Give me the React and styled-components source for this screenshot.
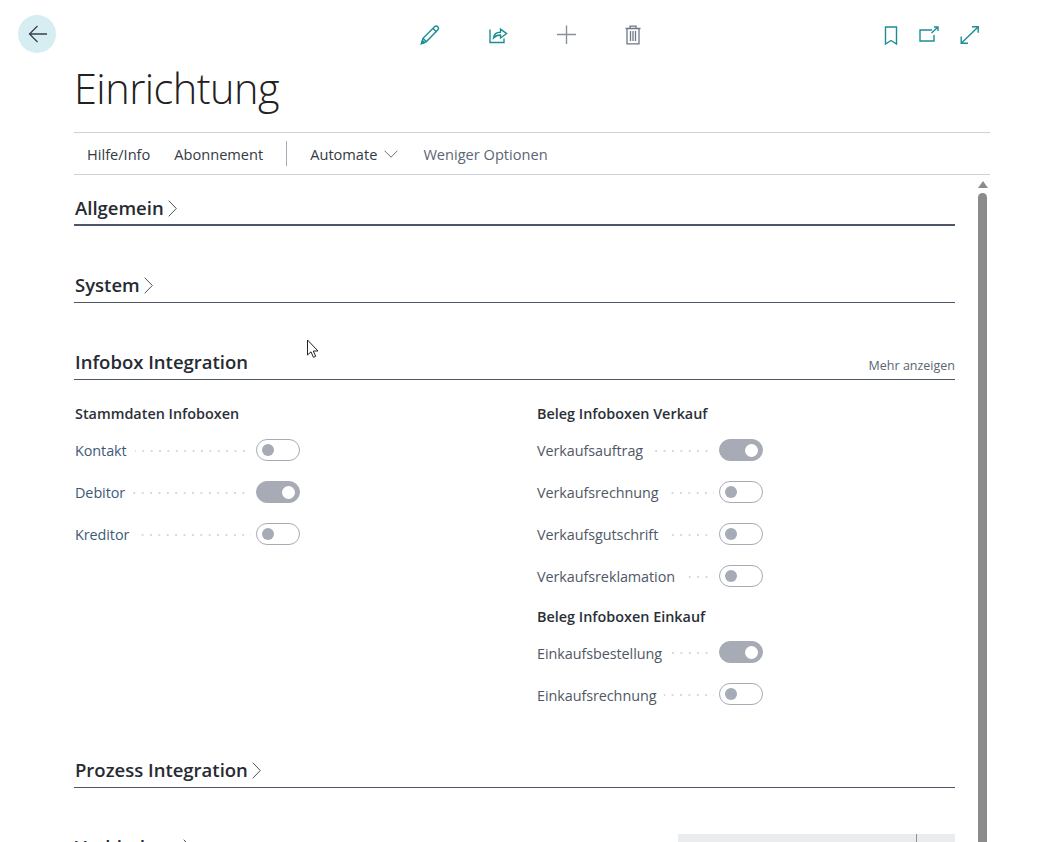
import React from "react";
import styled, { createGlobalStyle } from "styled-components";

const Global = createGlobalStyle`
  html, body { margin: 0; padding: 0; background: #fff; }
  body { font-family: "Open Sans", "Noto Sans", "Liberation Sans", sans-serif; color: #212121; }
  #root { height: 842px; overflow: hidden; }
`;

const Page = styled.div`
  position: relative;
  width: 1064px;
  height: 842px;
  overflow: hidden;
`;

const TopBar = styled.header`
  display: grid;
  grid-template-columns: 74px 1fr 184px;
  height: 66px;
`;

const BackCell = styled.div`
  padding: 15px 0 0 18px;
`;

const BackButton = styled.button`
  width: 38px;
  height: 38px;
  border: 0;
  padding: 0 0 0 1px;
  border-radius: 50%;
  background: #d6eef1;
  display: flex;
  align-items: center;
  justify-content: center;
`;

const CenterIcons = styled.div`
  display: flex;
  padding: 25px 0 0 346px;
  gap: 48px;
  align-items: flex-start;
`;

const RightIcons = styled.div`
  display: flex;
  padding: 26px 0 0 4px;
  gap: 21px;
  align-items: flex-start;
`;

const IconSvg = styled.svg`
  display: block;
  flex: none;
  fill: none;
  stroke: ${p => p.$color || "#1b8d93"};
  stroke-width: ${p => p.$sw || 1.4};
`;

const Main = styled.main`
  padding-left: 74px;
`;

const Title = styled.h1`
  margin: 0;
  height: 66px;
  font-family: "Open Sans", sans-serif;
  font-weight: 300;
  font-size: 41.5px;
  line-height: 45px;
  letter-spacing: -0.55px;
  color: #212121;
`;

const ActionBar = styled.nav`
  box-sizing: border-box;
  width: 916px;
  height: 43px;
  display: flex;
  align-items: center;
  border-top: 1px solid #cfd1d8;
  border-bottom: 1px solid #cfd1d8;
  font-size: 14.6px;
  padding: 1px 0 0 13px;
`;

const ActionItem = styled.span`
  color: ${p => (p.$muted ? "#5b6573" : "#333a44")};
  margin-right: ${p => p.$gap || 24}px;
  display: flex;
  align-items: center;
  gap: 7px;
`;

const ActionDivider = styled.span`
  width: 1px;
  height: 25px;
  background: #a8acb4;
  margin: -1px 23px 0 0;
`;

const ScrollWrap = styled.div`
  display: grid;
  grid-template-columns: 881px 32px;
  gap: 19px;
`;

const Content = styled.div`
  width: 881px;
`;

const ScrollBar = styled.div`
  display: flex;
  flex-direction: column;
  align-items: center;
  width: 9px;
  margin-left: 4px;
  padding-top: 6px;
`;

const ScrollArrow = styled.div`
  width: 0;
  height: 0;
  border-left: 5px solid transparent;
  border-right: 5px solid transparent;
  border-bottom: 7px solid #8b8b8b;
`;

const ScrollThumb = styled.div`
  width: 9px;
  height: 700px;
  margin-top: 5px;
  border-radius: 5px 5px 0 0;
  background: #8b8b8b;
`;

const Section = styled.section`
  margin-top: ${p => p.$top || 0}px;
`;

const SectionHead = styled.div`
  height: ${p => p.$h || 50}px;
  box-sizing: border-box;
  display: flex;
  align-items: flex-end;
  justify-content: space-between;
  border-bottom: ${p => p.$rule || 1}px solid #4d5666;
  padding: 0 0 ${p => (p.$rule === 2 ? 3 : 4)}px 1px;
`;

const SectionTitle = styled.h2`
  margin: 0;
  display: flex;
  align-items: center;
  gap: 4px;
  font-size: 18.5px;
  line-height: 26px;
  font-weight: 600;
  color: #262b33;
`;

const MoreLink = styled.a`
  font-size: 12.5px;
  color: #5b6573;
  line-height: 18px;
`;

const Columns = styled.div`
  display: grid;
  grid-template-columns: 463px 1fr;
  padding-top: 23px;
`;

const Column = styled.div`
  --label-inset: ${p => p.$inset || 0}px;
`;

const GroupTitle = styled.h3`
  margin: ${p => p.$top || 0}px 0 0;
  height: ${p => p.$h || 25}px;
  padding-left: var(--label-inset);
  font-size: 14.4px;
  line-height: 22px;
  font-weight: 600;
  color: #2b3038;
`;

const Row = styled.div`
  display: flex;
  align-items: center;
  width: 226px;
  height: 42px;
`;

const Label = styled.span`
  font-size: 14.4px;
  letter-spacing: -0.07px;
  color: ${p => (p.$link ? "#3d5a78" : "#505866")};
  margin: 0 8px 0 var(--label-inset);
  white-space: nowrap;
  position: relative;
  top: ${p => (p.$low ? 2 : 1)}px;
`;

const Dots = styled.span`
  flex: 1;
  height: 2px;
  margin: 3px 5px 0 0;
  background-image: radial-gradient(circle at 1px 1px, #d6d8dd 1px, transparent 1.1px);
  background-size: 8.4px 2px;
  background-position: right center;
`;

const Switch = styled.span`
  position: relative;
  flex: none;
  box-sizing: border-box;
  width: 44px;
  height: 22px;
  border-radius: 11px;
  border: 1px solid #a6abb5;
  background: ${p => (p.$on ? "#a6abb5" : "#fff")};
  margin-top: 2px;
`;

const Knob = styled.span`
  position: absolute;
  top: ${p => (p.$on ? "3.5px" : "4px")};
  left: ${p => (p.$on ? "25px" : "4.5px")};
  width: ${p => (p.$on ? "13px" : "12px")};
  height: ${p => (p.$on ? "13px" : "12px")};
  border-radius: 50%;
  background: ${p => (p.$on ? "#fff" : "#a6abb5")};
`;

const GridHeader = styled.div`
  align-self: flex-start;
  width: 277px;
  height: 30px;
  margin-top: 19px;
  background: #ebecee;
  display: flex;
  justify-content: flex-end;
`;

const GridCell = styled.div`
  width: 38px;
  height: 30px;
  border-left: 1px solid #8f8f8f;
`;

const Cursor = styled.svg`
  position: absolute;
  left: 306px;
  top: 339px;
`;

const Icon = {
  Back: () => (
    <IconSvg width="20" height="18" viewBox="0 0 20 18" $color="#3b4048" $sw={1.3}>
      <path d="M19 9H1.5M9.500 1 1.500 9l8 8" />
    </IconSvg>
  ),
  Pencil: () => (
    <IconSvg width="20" height="20" viewBox="0 0 20 20">
      <path d="M1.500 18.500 3 13.300 14.600 1.800c.9-.9 2.300-.9 3.100-.1.9.9.9 2.300 0 3.200L6.200 16.800z" />
      <path d="M13 3.500l3.600 3.600M3 13.300l3.400 3.400" />
      <path d="M1.500 18.500l3-1-2-2z" fill="#1b8d93" />
    </IconSvg>
  ),
  Share: () => (
    <IconSvg width="20" height="20" viewBox="0 0 20 20">
      <path d="M2 4.500v13h14v-4" />
      <path d="M5.500 13c.4-3.800 3-5.800 7-5.800V4.200L18.600 8.600 12.500 13v-3c-3 0-5 .8-7 3z" />
    </IconSvg>
  ),
  Plus: () => (
    <IconSvg width="20" height="20" viewBox="0 0 20 20" $color="#8a8f98" $sw={1.4}>
      <path d="M10.500 .5v18.500M1 9.500h19" />
    </IconSvg>
  ),
  Trash: () => (
    <IconSvg width="18" height="20" viewBox="-2 0 18 20" $color="#6f7785" $sw={1.3}>
      <path d="M-.5 3.500h15M4 3.500V1.200h6v2.300M1 3.500v15.300h12V3.500" />
      <path d="M4.500 6v10M7 6v10M9.500 6v10" />
    </IconSvg>
  ),
  Bookmark: () => (
    <IconSvg width="14" height="19" viewBox="0 0 14 19">
      <path d="M1.500 1h11v17L7 14.500 1.500 18z" />
    </IconSvg>
  ),
  Open: () => (
    <IconSvg width="20" height="16" viewBox="0 0 20 16">
      <path d="M13 4H1v11h14V9" />
      <path d="M12.500 7 19 1M15 1h4v4" />
    </IconSvg>
  ),
  Expand: () => (
    <IconSvg width="19" height="18" viewBox="0 0 19 18">
      <path d="M1.500 17 18 1M12 .8h6.200v6M1.200 10.500v6.700H8" />
    </IconSvg>
  ),
  ChevronRight: () => (
    <IconSvg width="9" height="17" viewBox="0 0 9 17" $color="#4b505a" $sw={1}>
      <path d="M.7 .7 8.300 8.500.7 16.300" />
    </IconSvg>
  ),
  ChevronDown: () => (
    <IconSvg width="14" height="8" viewBox="0 0 14 8" $color="#6b7280" $sw={1}>
      <path d="M.5 .7 7 7.200 13.500 .7" />
    </IconSvg>
  ),
};

const Field = ({ label, on, link, low }) => (
  <Row>
    <Label $link={link} $low={low}>{label}</Label>
    <Dots />
    <Switch $on={on}>
      <Knob $on={on} />
    </Switch>
  </Row>
);

const Head = ({ title, h, rule, chevron = true, more, children }) => (
  <SectionHead $h={h} $rule={rule}>
    <SectionTitle>
      {title}
      {chevron && <Icon.ChevronRight />}
    </SectionTitle>
    {more && <MoreLink>{more}</MoreLink>}
    {children}
  </SectionHead>
);

export default function App() {
  return (
    <Page>
      <Global />
      <TopBar>
        <BackCell>
          <BackButton aria-label="Zurück">
            <Icon.Back />
          </BackButton>
        </BackCell>
        <CenterIcons>
          <Icon.Pencil />
          <Icon.Share />
          <Icon.Plus />
          <Icon.Trash />
        </CenterIcons>
        <RightIcons>
          <Icon.Bookmark />
          <Icon.Open />
          <Icon.Expand />
        </RightIcons>
      </TopBar>
      <Main>
        <Title>Einrichtung</Title>
        <ActionBar>
          <ActionItem>Hilfe/Info</ActionItem>
          <ActionItem $gap={23}>Abonnement</ActionItem>
          <ActionDivider />
          <ActionItem $gap={25}>
            Automate <Icon.ChevronDown />
          </ActionItem>
          <ActionItem $muted>Weniger Optionen</ActionItem>
        </ActionBar>
        <ScrollWrap>
          <Content>
            <Section>
              <Head title="Allgemein" h={51} rule={2} />
            </Section>
            <Section $top={27}>
              <Head title="System" />
            </Section>
            <Section $top={27}>
              <Head title="Infobox Integration" chevron={false} more="Mehr anzeigen" />
              <Columns>
                <Column $inset={1}>
                  <GroupTitle>Stammdaten Infoboxen</GroupTitle>
                  <Field link label="Kontakt" />
                  <Field link label="Debitor" on />
                  <Field link label="Kreditor" />
                </Column>
                <Column>
                  <GroupTitle>Beleg Infoboxen Verkauf</GroupTitle>
                  <Field label="Verkaufsauftrag" on />
                  <Field label="Verkaufsrechnung" />
                  <Field label="Verkaufsgutschrift" />
                  <Field label="Verkaufsreklamation" />
                  <GroupTitle $top={10} $h={24}>Beleg Infoboxen Einkauf</GroupTitle>
                  <Field low label="Einkaufsbestellung" on />
                  <Field low label="Einkaufsrechnung" />
                </Column>
              </Columns>
            </Section>
            <Section $top={24}>
              <Head title="Prozess Integration" />
            </Section>
            <Section $top={27}>
              <Head title="Verbindung">
                <GridHeader>
                  <GridCell />
                </GridHeader>
              </Head>
            </Section>
          </Content>
          <ScrollBar>
            <ScrollArrow />
            <ScrollThumb />
          </ScrollBar>
        </ScrollWrap>
      </Main>
      <Cursor width="14" height="20" viewBox="0 0 14 20">
        <path d="M1.500 1v15l3.500-3.200 2.400 5.500 2.300-1-2.400-5.300h4.700z" fill="#fff" stroke="#222" strokeWidth="1" />
      </Cursor>
    </Page>
  );
}
